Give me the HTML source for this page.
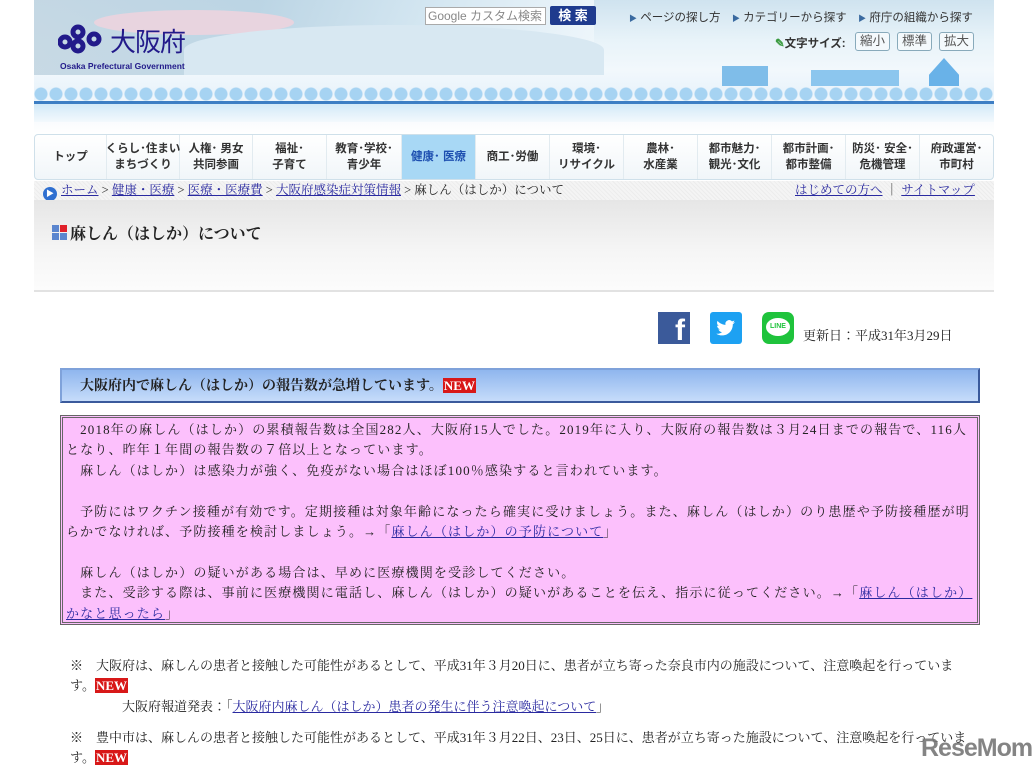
<!DOCTYPE html>
<html><head><meta charset="utf-8"><style>
*{margin:0;padding:0;box-sizing:border-box}
body{width:1032px;height:769px;overflow:hidden;background:#fff;font-family:"Liberation Serif","Noto Serif CJK JP",serif;color:#222;position:relative}
.sans{font-family:"Liberation Sans","Noto Sans CJK JP",sans-serif}
#hdr{position:absolute;left:34px;top:0;width:960px;height:134px;background:linear-gradient(#cfe3ef 0,#e8f3f9 40px,#f2f8fc 70px,#eaf4fb 90px,#ffffff 134px);overflow:hidden}
.photo{position:absolute;left:0;top:0;width:560px;height:75px;background:linear-gradient(90deg,#c3d6e2,#b9d3e3 40%,#d3e6f1 70%,#eef6fb);opacity:.9}
.river{position:absolute;left:150px;top:25px;width:420px;height:50px;border-radius:50% 50% 0 0;background:#d8e8f2}
.pink{position:absolute;left:60px;top:10px;width:200px;height:25px;border-radius:50%;background:#e8d4df}
.trees{position:absolute;left:0;top:84px;width:960px;height:18px;background:radial-gradient(circle at 7px 10px,#a6d3f2 6px,transparent 7px) 0 0/15px 18px repeat-x}
.line{position:absolute;left:0;top:101px;width:960px;height:3px;background:#3d7ec4}
.refl{position:absolute;left:0;top:104px;width:960px;height:18px;background:linear-gradient(#d2e9f8,#f3f9fd)}
#nav{position:absolute;left:34px;top:134px;width:960px;height:46px;border:1px solid #cfe0ea;border-radius:4px;background:linear-gradient(#fff,#f1f6f9);display:flex;font-size:11.5px;font-weight:bold;color:#333}
#nav div{flex:none;display:flex;align-items:center;justify-content:center;text-align:center;line-height:16px;border-right:1px solid #e2ebf0;white-space:nowrap}
#bc{position:absolute;left:34px;top:181px;width:960px;height:19px;background:repeating-linear-gradient(45deg,#f4f4f4 0 2px,#ececec 2px 3px);font-size:12.5px;line-height:19px}
a,.lk{color:#2a2aa0;text-decoration:underline}
#ttl{position:absolute;left:34px;top:200px;width:960px;height:92px;background:linear-gradient(#e6e6e6,#f6f6f6 60%,#fcfcfc);border-bottom:2px solid #e2e2e2}
.new{background:#d81818;color:#fff;font-weight:bold;font-family:"Liberation Serif",serif;font-size:13px;padding:0 1px;letter-spacing:0}
p{font-size:13px;line-height:20.4px}
</style></head><body>
<div id="hdr">
 <div class="photo"></div><div class="pink"></div><div class="river"></div>
 <div class="trees"></div><div class="line"></div><div class="refl"></div>
 <div style="position:absolute;left:688px;top:66px;width:46px;height:20px;background:#7fbde9"></div>
 <div style="position:absolute;left:777px;top:70px;width:88px;height:16px;background:#8cc6ee"></div>
 <div style="position:absolute;left:895px;top:58px;width:30px;height:28px;background:#69b2e8;clip-path:polygon(50% 0,100% 60%,100% 100%,0 100%,0 60%)"></div>
 <svg style="position:absolute;left:24px;top:24px" width="50" height="30" viewBox="0 0 50 30"><g fill="none" stroke="#221a8a" stroke-width="5"><circle cx="7" cy="18" r="5"/><circle cx="20" cy="8" r="5"/><circle cx="20" cy="22" r="5"/><circle cx="36" cy="15" r="5"/></g></svg>
 <div class="sans" style="position:absolute;left:76px;top:22px;font-size:26px;color:#221a8a;letter-spacing:-1px">大阪府</div>
 <div class="sans" style="position:absolute;left:26px;top:61px;font-size:8.5px;font-weight:bold;color:#221a8a">Osaka Prefectural Government</div>
 <div class="sans" style="position:absolute;left:391px;top:7px;width:121px;height:18px;background:#fff;border:1px solid #aaa;font-size:12px;color:#888;line-height:16px;padding-left:2px;overflow:hidden;white-space:nowrap">Google カスタム検索</div>
 <div class="sans" style="position:absolute;left:516px;top:6px;width:46px;height:19px;background:#1f3b8e;border-radius:2px;color:#fff;font-weight:bold;font-size:13px;text-align:center;line-height:19px">検 索</div>
 <div class="sans" style="position:absolute;left:595px;top:9px;font-size:11.5px;color:#333;white-space:nowrap"><span style="color:#3a6aa0;font-size:8px">▶</span> ページの探し方　<span style="color:#3a6aa0;font-size:8px">▶</span> カテゴリーから探す　<span style="color:#3a6aa0;font-size:8px">▶</span> 府庁の組織から探す</div>
 <div class="sans" style="position:absolute;left:741px;top:35px;font-size:11.5px;font-weight:bold;color:#333"><span style="color:#3a9a40">✎</span>文字サイズ:</div>
 <div class="sans" style="position:absolute;left:821px;top:32px;display:flex;gap:7px;font-size:12.5px;color:#555">
  <span style="border:1px solid #8ab;border-radius:3px;background:#f4f9fc;padding:0 4px;line-height:17px">縮小</span>
  <span style="border:1px solid #8ab;border-radius:3px;background:#f4f9fc;padding:0 4px;line-height:17px">標準</span>
  <span style="border:1px solid #8ab;border-radius:3px;background:#f4f9fc;padding:0 4px;line-height:17px">拡大</span></div>
</div>
<div id="nav" class="sans">
 <div style="width:72px">トップ</div><div style="width:73px">くらし･住まい<br>まちづくり</div><div style="width:73px">人権･ 男女<br>共同参画</div><div style="width:74px">福祉･<br>子育て</div><div style="width:75px">教育･学校･<br>青少年</div>
 <div style="width:74px;background:#a8d8f5;color:#1d4fb0">健康･ 医療</div><div style="width:74px">商工･労働</div><div style="width:74px">環境･<br>リサイクル</div><div style="width:74px">農林･<br>水産業</div><div style="width:74px">都市魅力･<br>観光･文化</div><div style="width:74px">都市計画･<br>都市整備</div><div style="width:74px">防災･ 安全･<br>危機管理</div><div style="width:73px;border:none">府政運営･<br>市町村</div>
</div>
<div id="bc"><span style="display:inline-block;width:14px;height:14px;border-radius:50%;background:#2f6fd0;color:#fff;font-size:8px;text-align:center;line-height:14px;margin:0 4px 0 9px;vertical-align:-2px">▶</span><a>ホーム</a> &gt; <a>健康・医療</a> &gt; <a>医療・医療費</a> &gt; <a>大阪府感染症対策情報</a> &gt; 麻しん（はしか）について
 <span style="position:absolute;left:761px;top:0"><a>はじめての方へ</a> ｜ <a>サイトマップ</a></span></div>
<div id="ttl"><div style="position:absolute;left:18px;top:21px;font-size:16px;font-weight:bold;display:flex;align-items:center"><span style="display:inline-grid;grid-template-columns:7px 7px;gap:1px;margin-right:3px"><i style="width:7px;height:7px;background:#5b86cf"></i><i style="width:7px;height:7px;background:#e0202a"></i><i style="width:7px;height:7px;background:#5b86cf"></i><i style="width:7px;height:7px;background:#5b86cf"></i></span>麻しん（はしか）について</div></div>
<div style="position:absolute;left:658px;top:312px;width:32px;height:32px;background:#3b5a9a;color:#fff;font:bold 30px 'Liberation Sans';text-align:right;padding-right:5px;line-height:38px;overflow:hidden">f</div>
<div style="position:absolute;left:710px;top:312px;width:32px;height:32px;background:#1da1f2;border-radius:3px"><svg width="32" height="32" viewBox="0 0 32 32"><path d="M25 10c-.7.3-1.4.5-2.2.6.8-.5 1.4-1.2 1.6-2.1-.8.4-1.6.8-2.4.9a3.8 3.8 0 0 0-6.5 3.5c-3.2-.2-6-1.7-7.9-4-1.1 1.9-.4 4.1 1.2 5.1-.6 0-1.2-.2-1.7-.5 0 1.9 1.3 3.4 3 3.8-.6.2-1.2.2-1.7.1.5 1.5 1.9 2.6 3.6 2.7-1.6 1.3-3.7 1.9-5.7 1.6 1.7 1.1 3.7 1.7 5.8 1.7 7 0 10.9-5.9 10.7-11.2.8-.5 1.4-1.2 1.9-2z" fill="#fff"/></svg></div>
<div style="position:absolute;left:762px;top:312px;width:32px;height:32px;background:#1fc33c;border-radius:7px"><div style="position:absolute;left:4px;top:6px;width:24px;height:18px;background:#fff;border-radius:50%;font:bold 7px 'Liberation Sans';color:#1fc33c;text-align:center;line-height:18px">LINE</div></div>
<div style="position:absolute;left:803px;top:325px;font-size:13px">更新日：平成31年3月29日</div>
<div style="position:absolute;left:60px;top:368px;width:920px;height:35px;background:linear-gradient(#8fb6ee,#c6dcfa);border:2px solid #3a5a9c;border-top-color:#7fa2da;border-left-color:#7fa2da;font-size:14px;font-weight:bold;line-height:31px;padding-left:18px">大阪府内で麻しん（はしか）の報告数が急増しています。<span class="new">NEW</span></div>
<div style="position:absolute;left:60px;top:415px;width:920px;height:210px;background:#fcc0fc;border:3px double #666;padding:2px 3px">
<p style="letter-spacing:1.15px">　2018年の麻しん（はしか）の累積報告数は全国282人、大阪府15人でした。2019年に入り、大阪府の報告数は３月24日までの報告で、116人となり、昨年１年間の報告数の７倍以上となっています。<br>　麻しん（はしか）は感染力が強く、免疫がない場合はほぼ100％感染すると言われています。<br><br>　予防にはワクチン接種が有効です。定期接種は対象年齢になったら確実に受けましょう。また、麻しん（はしか）のり患歴や予防接種歴が明らかでなければ、予防接種を検討しましょう。→「<span class="lk">麻しん（はしか）の予防について</span>」<br><br>　麻しん（はしか）の疑いがある場合は、早めに医療機関を受診してください。<br>　また、受診する際は、事前に医療機関に電話し、麻しん（はしか）の疑いがあることを伝え、指示に従ってください。→「<span class="lk">麻しん（はしか）かなと思ったら</span>」</p></div>
<p style="position:absolute;left:70px;top:656px;width:900px">※　大阪府は、麻しんの患者と接触した可能性があるとして、平成31年３月20日に、患者が立ち寄った奈良市内の施設について、注意喚起を行っています。<span class="new">NEW</span><br>　　　　大阪府報道発表：「<span class="lk">大阪府内麻しん（はしか）患者の発生に伴う注意喚起について</span>」</p>
<p style="position:absolute;left:70px;top:728px;width:900px">※　豊中市は、麻しんの患者と接触した可能性があるとして、平成31年３月22日、23日、25日に、患者が立ち寄った施設について、注意喚起を行っています。<span class="new">NEW</span></p>
<div class="sans" style="position:absolute;left:921px;top:734px;font-size:25px;font-weight:bold;color:#777;letter-spacing:-1px;opacity:.9">ReseMom</div>
</body></html>
